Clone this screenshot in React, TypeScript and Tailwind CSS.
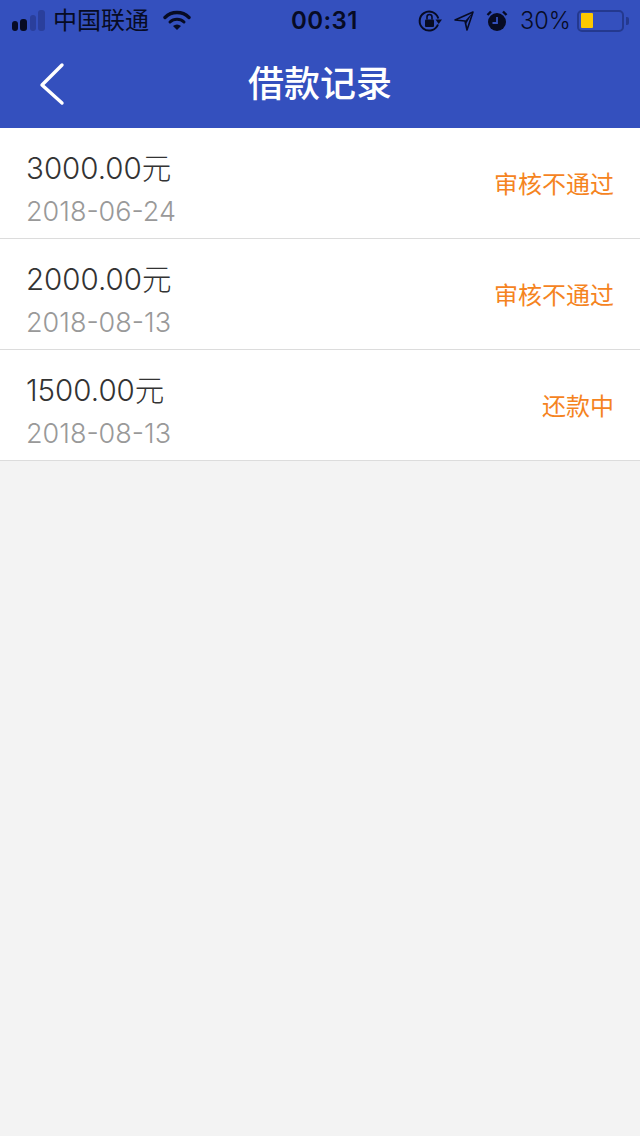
import React from "react";

const font = { fontFamily: '"Inter", "Noto Sans CJK SC", sans-serif' };

const rows = [
  { amount: "3000.00元", date: "2018-06-24", status: "审核不通过" },
  { amount: "2000.00元", date: "2018-08-13", status: "审核不通过" },
  { amount: "1500.00元", date: "2018-08-13", status: "还款中" },
];

function StatusBar() {
  return (
    <div className="relative flex h-10 items-center text-[#070b24]">
      <div className="ml-3 mt-[1px] flex h-[21px] items-end">
        <div className="h-[10px] w-[6px] rounded-[3px] bg-[#070b24]" />
        <div className="ml-[2px] h-[12px] w-[7px] rounded-[3px] bg-[#070b24]" />
        <div className="ml-[3px] h-[16px] w-[6px] rounded-[3px] bg-[#2a3f9c]" />
        <div className="ml-[2px] h-[21px] w-[7px] rounded-[3px] bg-[#2a3f9c]" />
      </div>
      <span className="ml-[8px] mt-[2px] text-[24px] leading-none">中国联通</span>
      <svg className="ml-[14px]" width="28" height="22" viewBox="0 0 28 22" fill="none">
        <path d="M2 8.5 A17 17 0 0 1 26 8.5" stroke="#070b24" strokeWidth="3.4" strokeLinecap="round" />
        <path d="M7 13 A10 10 0 0 1 21 13" stroke="#070b24" strokeWidth="3" strokeLinecap="round" />
        <path d="M10 17 A6 6 0 0 1 18 17 L14 21 Z" fill="#070b24" />
      </svg>
      <span className="absolute left-[291px] top-[6px] text-[24px] font-semibold leading-[30px] tracking-[0.4px]">00:31</span>
      <div className="ml-auto mr-[11px] mt-[1px] flex items-center">
        <svg width="24" height="24" viewBox="0 0 24 24" fill="none">
          <path d="M20 15.5 A9.5 9.5 0 1 1 20.3 9.5" stroke="#070b24" strokeWidth="2" />
          <path d="M17.5 10.5 L24 10.5 L20.7 15 Z" fill="#070b24" />
          <rect x="7" y="10.5" width="9" height="7.5" rx="1" fill="#070b24" />
          <path d="M9 10.5 V8 a2.5 2.5 0 0 1 5 0 V10.5" stroke="#070b24" strokeWidth="1.6" />
        </svg>
        <svg className="ml-[11px]" width="22" height="22" viewBox="0 0 22 22" fill="none">
          <path d="M20 2 L2 10 L12 11 L14 20 Z" stroke="#070b24" strokeWidth="1.6" strokeLinejoin="round" />
          <path d="M20 2 L12 11 L13 14 Z" fill="#070b24" />
        </svg>
        <svg className="ml-[11px]" width="22" height="22" viewBox="0 0 22 22">
          <circle cx="11" cy="12" r="9" fill="#070b24" />
          <path d="M11 7 V13 H6.5" stroke="#3450be" strokeWidth="1.8" fill="none" />
          <path d="M1.5 5 L5 1.5 M20.5 5 L17 1.5" stroke="#070b24" strokeWidth="2.4" />
        </svg>
        <span className="ml-[12px] w-[50px] text-[23.5px] font-light leading-none">30%</span>
        <div className="ml-[7px] flex h-[22px] w-[47px] items-center rounded-[5px] border-2 border-[#24398f] px-[2px]">
          <div className="h-[15px] w-[12px] rounded-[1px] bg-[#fcc800]" />
        </div>
        <div className="ml-[2px] h-[8px] w-[3px] rounded-r-[2px] bg-[#24398f]" />
      </div>
    </div>
  );
}

export default function App() {
  return (
    <div className="flex min-h-[1136px] w-[640px] flex-col bg-[#f3f3f3]" style={font}>
      <div className="bg-[#3450be]">
        <StatusBar />
        <div className="relative flex h-[88px] items-center justify-center">
          <svg className="absolute left-[38px] top-[22px]" width="28" height="44" viewBox="0 0 28 44" fill="none">
            <path d="M24 3 L4 23 L24 41" stroke="#fff" strokeWidth="3.4" strokeLinecap="round" strokeLinejoin="round" />
          </svg>
          <span className="text-[36px] font-medium leading-none text-white">借款记录</span>
        </div>
      </div>
      <div className="bg-white">
        {rows.map((r, i) => (
          <div key={i} className="flex h-[111px] items-center justify-between border-b border-[#dcdcdc] pl-[26px] pr-[26px]">
            <div className="mt-[14px] flex flex-col">
              <span className="text-[29.5px] font-light leading-[40px] text-[#333333]">{r.amount}</span>
              <span className="mt-[4px] text-[27px] font-light leading-[40px] text-[#999999]">{r.date}</span>
            </div>
            <span className="mt-[4px] text-[24px] leading-none text-[#f5841f]">{r.status}</span>
          </div>
        ))}
      </div>
    </div>
  );
}
